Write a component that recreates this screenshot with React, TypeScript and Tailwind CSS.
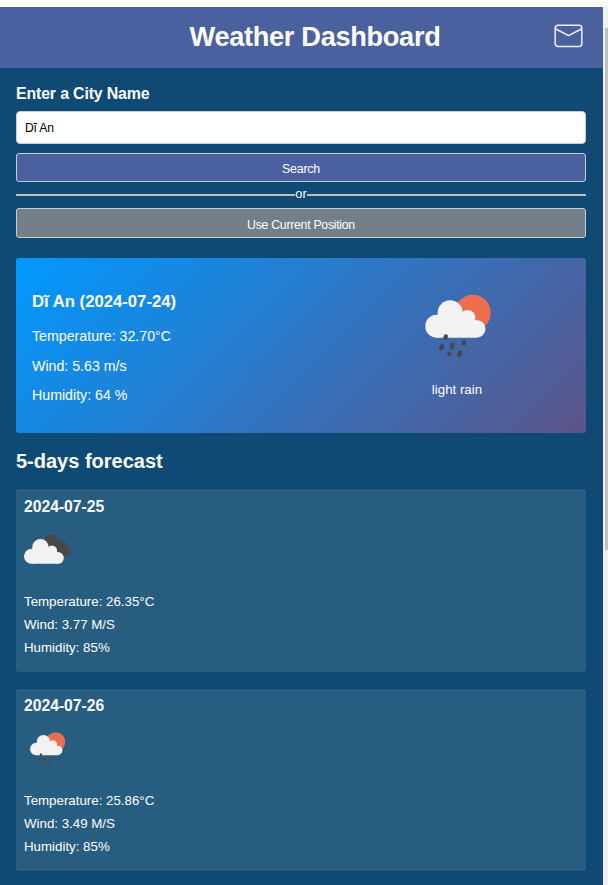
function MailIcon() {
  return (
    <svg className="block h-[24px] w-[29px]" viewBox="0 0 29 24" fill="none" stroke="white" strokeOpacity="0.9" strokeWidth="1.5" strokeLinejoin="round">
      <rect x="1.2" y="1.2" width="26.6" height="21.4" rx="3" />
      <path d="M1.8 5 L14.5 11.6 L27.4 5" />
    </svg>
  );
}

function CloudBody() {
  return (
    <g fill="#f2f2f2">
      <circle cx="11.5" cy="31.6" r="11.5" />
      <circle cx="25" cy="18.2" r="12.6" />
      <circle cx="42.4" cy="23.2" r="7.8" />
      <circle cx="51.4" cy="34.2" r="8.9" />
      <path d="M11.5 43.1 V20.5 H40 L50 25.5 L51.4 43.1 Z" />
    </g>
  );
}

function RainIcon({ className }: { className: string }) {
  return (
    <svg className={className} viewBox="0 0 66 64">
      <circle cx="47.6" cy="18.2" r="18" fill="#ec6e4c" />
      <CloudBody />
      <g stroke="#48484a" strokeWidth="4.3" strokeLinecap="round">
        <path d="M20.6 41.8 L20.2 43.2" />
        <path d="M16.9 51.4 L15.9 54" />
        <path d="M27.6 50 L26.5 52.9" />
        <path d="M38.9 47.6 L38.5 48.8" />
        <path d="M24.1 59 L24 59.4" />
        <path d="M34.9 57.9 L34 60.4" />
      </g>
    </svg>
  );
}

function CloudsIcon({ className }: { className: string }) {
  return (
    <svg className={className} viewBox="0 0 47 30">
      <g fill="#48484a">
        <circle cx="27.3" cy="8.4" r="8.3" />
        <circle cx="36.8" cy="10.7" r="4.8" />
        <circle cx="41.8" cy="16.2" r="5.1" />
        <path d="M27 9 L38 10 L41.5 14 L42 21.3 H30 Z" />
      </g>
      <g transform="translate(0 0.9) scale(0.66)">
        <CloudBody />
      </g>
    </svg>
  );
}

type Day = { date: string; icon: "clouds" | "rain"; temp: string; wind: string; humidity: string };

const days: Day[] = [
  { date: "2024-07-25", icon: "clouds", temp: "26.35", wind: "3.77", humidity: "85" },
  { date: "2024-07-26", icon: "rain", temp: "25.86", wind: "3.49", humidity: "85" },
];

function DayCard({ day }: { day: Day }) {
  return (
    <section className="rounded-[3px] bg-[#285d82] px-2 pt-[8px] pb-[12.4px] last:pt-[7px]">
      <h3 className="text-[15.7px] leading-[20px] font-bold">{day.date}</h3>
      <div className="h-[73px]">
        {day.icon === "clouds" ? (
          <CloudsIcon className="h-[30px] w-[47px] translate-y-[17.5px]" />
        ) : (
          <RainIcon className="ml-[6px] h-[34.5px] w-[35.5px] translate-y-[16px]" />
        )}
      </div>
      <div className="text-[13.3px] leading-[23.2px]">
        <p>Temperature: {day.temp}°C</p>
        <p>Wind: {day.wind} M/S</p>
        <p>Humidity: {day.humidity}%</p>
      </div>
    </section>
  );
}

export default function App() {
  return (
    <div className="flex h-[885px] w-[608px] overflow-hidden bg-white pt-[7px] font-['Liberation_Sans',Arial,sans-serif] text-white">
      <div className="w-[603px] shrink-0 bg-[#0f4a75]">
        <header className="grid h-[61px] grid-cols-[1fr_auto_1fr] items-center bg-[#4b609f] pb-[3px] pl-[27px]">
          <span />
          <h1 className="pt-px text-[27.2px] leading-[33px] font-bold tracking-[-0.32px]">Weather Dashboard</h1>
          <div className="flex justify-end pr-[20px]">
            <MailIcon />
          </div>
        </header>
        <main className="flex flex-col px-4 pr-[17px] pt-[16px]">
          <label className="text-[15.9px] leading-[20px] font-bold tracking-[-0.15px]">Enter a City Name</label>
          <div className="mt-[7px] flex h-[33px] items-center rounded-[4px] border border-[#cccccc] bg-white px-2 pt-px text-[12.2px] tracking-[-0.2px] text-black">
            Dĩ An
          </div>
          <button className="mt-[9px] h-[29px] rounded-[3px] border border-[#cccccc] bg-[#4b609f] pt-[2px] text-[12.4px] leading-[14px] tracking-[-0.2px]">
            Search
          </button>
          <div className="flex h-[26px] items-center text-[12.8px] leading-[14px]">
            <span className="h-[2px] flex-1 bg-[#bfbfbf]" />
            <span className="-mt-[2px]">or</span>
            <span className="h-[2px] flex-1 bg-[#bfbfbf]" />
          </div>
          <button className="h-[30px] rounded-[3px] border border-[#cccccc] bg-[#727e89] pt-[3px] text-[12.3px] leading-[14px] tracking-[-0.28px]">
            Use Current Position
          </button>
          <section className="mt-5 flex h-[175px] rounded-[3px] bg-[linear-gradient(135deg,#0099ff,#5c5489)] pl-4">
            <div className="w-[296px] pt-[34px]">
              <h2 className="text-[16.7px] leading-[20px] font-bold">Dĩ An (2024-07-24)</h2>
              <div className="mt-[10px] text-[14.2px] leading-[29.5px]">
                <p>Temperature: 32.70°C</p>
                <p>Wind: 5.63 m/s</p>
                <p>Humidity: 64 %</p>
              </div>
            </div>
            <div className="flex flex-1 flex-col items-center pt-[36px]">
              <RainIcon className="h-[64px] w-[66px] translate-x-[1.2px] translate-y-[0.6px]" />
              <p className="mt-[23px] text-[13.3px] leading-[18px]">light rain</p>
            </div>
          </section>
          <h2 className="mt-[15px] text-[20px] leading-[26px] font-bold">5-days forecast</h2>
          <div className="mt-[15px] flex flex-col gap-[17px]">
            {days.map((day) => (
              <DayCard key={day.date} day={day} />
            ))}
          </div>
        </main>
      </div>
      <div className="w-[5px] bg-[#f1f1f1] pt-[21px] pl-[2px]">
        <div className="h-[522px] bg-[#c1c1c1]" />
      </div>
    </div>
  );
}
